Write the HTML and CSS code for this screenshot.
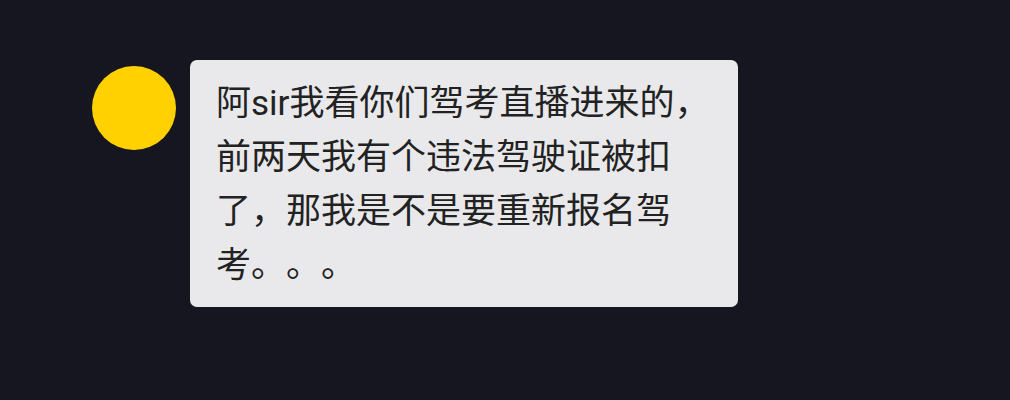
FILE: index.html
```html
<!DOCTYPE html>
<html lang="zh">
<head>
<meta charset="utf-8">
<link rel="stylesheet" href="styles.css">
</head>
<body>
<div class="chat">
  <div class="row">
    <div class="avatar"></div>
    <div class="bubble">阿sir我看你们驾考直播进来的，前两天我有个违法驾驶证被扣了，那我是不是要重新报名驾考。。。</div>
  </div>
</div>
</body>
</html>
```
FILE: styles.css
```css
html, body {
  margin: 0;
  padding: 0;
  background: #161621;
  width: 1010px;
  height: 400px;
  overflow: hidden;
}
.chat {
  padding: 60px 0 0 92px;
}
.row {
  display: flex;
  align-items: flex-start;
  gap: 14px;
}
.avatar {
  width: 84px;
  height: 84px;
  border-radius: 50%;
  background: #ffd100;
  margin-top: 6px;
  flex-shrink: 0;
}
.bubble {
  box-sizing: border-box;
  width: 548px;
  height: 247px;
  padding: 17px 18px 0 26px;
  background: #e9e9eb;
  border-radius: 7px;
  color: #222222;
  font-family: Roboto, "Noto Sans CJK SC", sans-serif;
  font-size: 35px;
  line-height: 54px;
  line-break: strict;
  text-spacing-trim: space-all;
}
```
